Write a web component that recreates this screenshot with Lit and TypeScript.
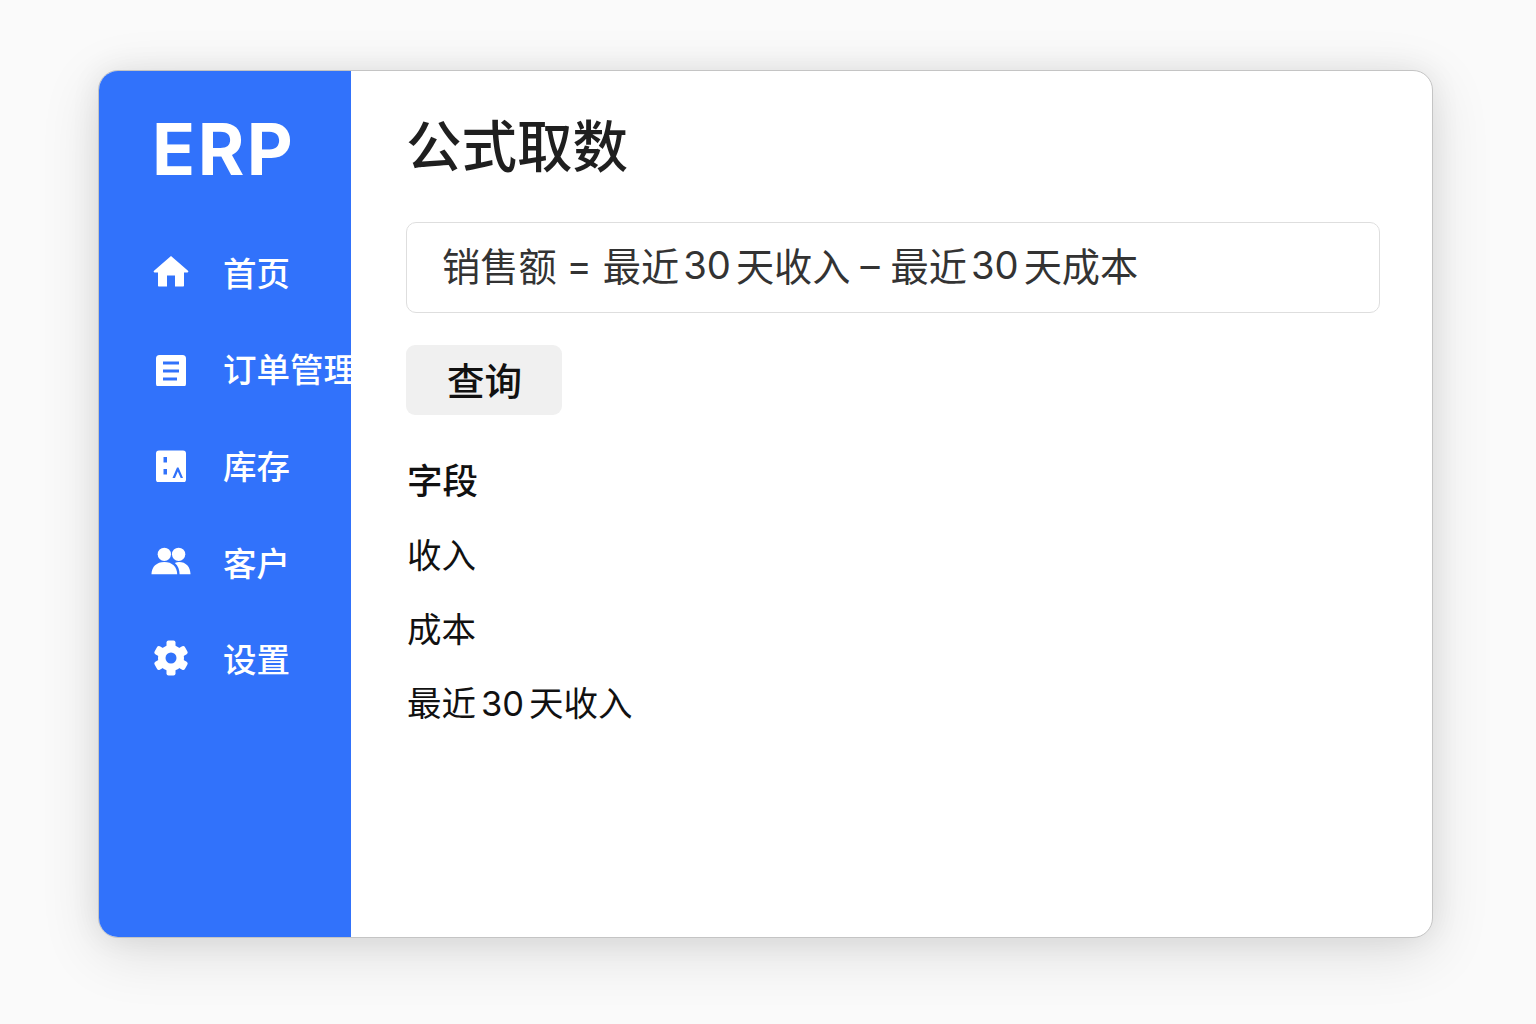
import { LitElement, html, css, svg } from "lit";
import { customElement } from "lit/decorators.js";

const teeth = [0, 60, 120, 180, 240, 300];

const icons = {
  home: html`<svg viewBox="0 0 36 36" width="36" height="36"><path fill="#fff" d="M18 3 1 17.800c-.7.700-.3 1.700.6 1.700H5v13c0 .6.400 1 1 1h8V22.500h8V33.500h8c.6 0 1-.4 1-1v-13h3.400c.9 0 1.300-1 .6-1.700z"/></svg>`,
  doc: html`<svg viewBox="0 -3 36 36" width="36" height="36"><path fill="#fff" fill-rule="evenodd" d="M6.500 2h23A3.500 3.500 0 0 1 33 5.500v25a3.500 3.500 0 0 1-3.500 3.500h-23A3.500 3.500 0 0 1 3 30.500v-25A3.500 3.500 0 0 1 6.500 2zM10 8.500v3h16v-3zM10 16.500v3h16v-3zM10 24.500v3h14v-3z"/></svg>`,
  box: html`<svg viewBox="0 -2.500 36 36" width="36" height="36"><path fill="#fff" fill-rule="evenodd" d="M6 2h24a3 3 0 0 1 3 3v26a3 3 0 0 1-3 3H6a3 3 0 0 1-3-3V5a3 3 0 0 1 3-3zm4.500 6.500v5.500h3.500V8.500zm0 12v5.500h3.500v-5.500zm13.500-1.500-4.500 10.500h2.500l2.800-6.600 2.900 6.600H30l-4.500-10.500z"/></svg>`,
  users: html`<svg viewBox="0 0 42 30" width="42" height="30"><g fill="#fff"><circle cx="14" cy="8" r="7"/><circle cx="29" cy="8" r="7"/><path d="M.5 29c0-8 5.500-13 13.500-13s13.500 5 13.500 13z"/><path d="M30 29c0-5-1.500-9-5-12 1.500-.7 3-1 4.500-1 7 0 12 5 12 13z"/></g></svg>`,
  gear: html`<svg viewBox="0 0 36 36" width="36" height="36"><circle cx="18" cy="18" r="13" fill="#fff"/>${teeth.map(
    (a) => svg`<rect x="13.500" y="0.500" width="9" height="10" rx="2" fill="#fff" transform="rotate(${a} 18 18)"/>`
  )}<circle cx="18" cy="18" r="5.500" fill="#3172fb"/></svg>`,
};

@customElement("app-root")
export class AppRoot extends LitElement {
  static styles = css`
    :host { display: block; min-height: 1024px; background: #fafafa; }
  `;
  render() { return html`<erp-window></erp-window>`; }
}

@customElement("erp-window")
export class ErpWindow extends LitElement {
  static styles = css`
    :host {
      display: block;
      font-family: "Inter", "Noto Sans CJK SC", sans-serif;
      padding: 70px 103px 86px 98px;
    }
    .win {
      display: flex;
      height: 868px;
      box-sizing: border-box;
      border: 1px solid #c4c4c4;
      border-radius: 20px;
      background: #fff;
      overflow: hidden;
      box-shadow: 0 14px 60px rgba(0, 0, 0, 0.12), 0 0 30px rgba(0, 0, 0, 0.07);
    }
    .side {
      width: 252px;
      flex: none;
      background: #3172fb;
      color: #fff;
      overflow: hidden;
      box-sizing: border-box;
      padding-left: 52px;
    }
    .logo {
      font-size: 71px;
      font-weight: 700;
      line-height: 80px;
      letter-spacing: 2.500px;
      margin: 38px 0 0 1px;
      height: 80px;
    }
    .nav { margin-top: 34px; display: flex; flex-direction: column; }
    .item {
      display: flex;
      align-items: center;
      height: 96.600px;
      white-space: nowrap;
      font-size: 33.500px;
      font-weight: 500;
    }
    .ic { width: 40px; display: flex; justify-content: center; flex: none; }
    .label { margin-left: 32px; }
    .main { flex: 1; padding: 39px 52px 0 55px; min-width: 0; }
    h1 {
      margin: 0;
      font-size: 55.500px;
      font-weight: 500;
      line-height: 74px;
      color: #1f1f1f;
      height: 76px;
    }
    .formula {
      margin-top: 36px;
      height: 91px;
      box-sizing: border-box;
      border: 1px solid #dedede;
      border-radius: 10px;
      padding: 0 0 6px 35px;
      display: flex;
      align-items: center;
      font-size: 38.200px;
      color: #333;
      white-space: pre;
    }
    .formula .num { margin: 0 5px 0 4px; }
    .op { margin: 0 11px 0 10px; }
    button {
      display: block;
      margin-top: 32px;
      width: 156px;
      height: 70px;
      border: none;
      border-radius: 9px;
      background: #f0f0f0;
      color: #111;
      font: inherit;
      font-size: 37.500px;
      font-weight: 500;
      padding: 0 0 4px 1px;
    }
    .fields { margin: 30px 0 0 1px; color: #111; font-size: 34.500px; }
    .fields div { height: 74px; line-height: 74px; white-space: nowrap; }
    .fields .head { font-weight: 500; font-size: 35.500px; }
    .fields .num { margin: 0 5px; }
  `;
  nav = [
    ["home", "首页"],
    ["doc", "订单管理"],
    ["box", "库存"],
    ["users", "客户"],
    ["gear", "设置"],
  ] as const;
  render() {
    return html`<div class="win">
      <aside class="side">
        <div class="logo">ERP</div>
        <nav class="nav">
          ${this.nav.map(
            ([i, t]) => html`<div class="item"><span class="ic">${icons[i]}</span><span class="label">${t}</span></div>`
          )}
        </nav>
      </aside>
      <main class="main">
        <h1>公式取数</h1>
        <div class="formula"><span>销售额</span><span class="op">=</span><span>最近</span><span class="num">30</span><span>天收入</span><span class="op">–</span><span>最近</span><span class="num">30</span><span>天成本</span></div>
        <button>查询</button>
        <div class="fields">
          <div class="head">字段</div>
          <div>收入</div>
          <div>成本</div>
          <div>最近<span class="num">30</span>天收入</div>
        </div>
      </main>
    </div>`;
  }
}
